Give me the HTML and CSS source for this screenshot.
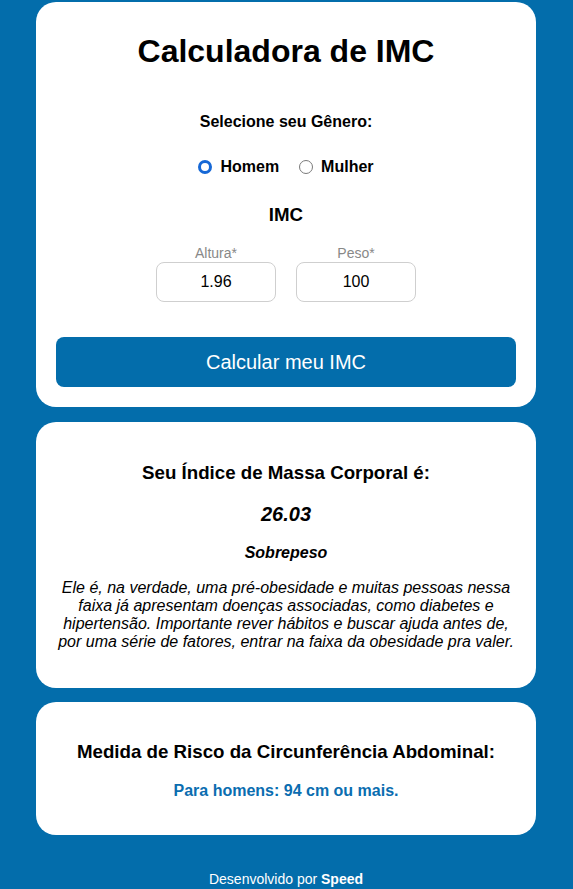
FILE: index.html
```html
<!DOCTYPE html>
<html lang="pt-BR">
<head>
<meta charset="utf-8">
<title>Calculadora de IMC</title>
<link rel="stylesheet" href="styles.css">
</head>
<body>
<main class="page">
  <section class="card card-form">
    <h1 class="title">Calculadora de IMC</h1>
    <p class="gender-title">Selecione seu Gênero:</p>
    <div class="gender-options">
      <label class="option"><input class="radio" type="radio" name="genero" checked><span>Homem</span></label>
      <label class="option"><input class="radio" type="radio" name="genero"><span>Mulher</span></label>
    </div>
    <h3 class="section-title">IMC</h3>
    <div class="fields">
      <label class="field"><span class="field-label">Altura*</span><input class="field-input" type="text" value="1.96"></label>
      <label class="field"><span class="field-label">Peso*</span><input class="field-input" type="text" value="100"></label>
    </div>
    <button class="btn" type="button">Calcular meu IMC</button>
  </section>

  <section class="card card-result">
    <h3 class="result-title">Seu Índice de Massa Corporal é:</h3>
    <p class="result-value">26.03</p>
    <p class="result-class">Sobrepeso</p>
    <p class="result-text">Ele é, na verdade, uma pré-obesidade e muitas pessoas nessa faixa já apresentam doenças associadas, como diabetes e hipertensão. Importante rever hábitos e buscar ajuda antes de, por uma série de fatores, entrar na faixa da obesidade pra valer.</p>
  </section>

  <section class="card card-risk">
    <h3 class="risk-title">Medida de Risco da Circunferência Abdominal:</h3>
    <p class="risk-text">Para homens: 94 cm ou mais.</p>
  </section>

  <footer class="footer">Desenvolvido por <strong>Speed</strong></footer>
</main>
</body>
</html>
```

FILE: styles.css
```css
* { box-sizing: border-box; }

html, body {
  margin: 0;
  padding: 0;
  background: #036dab;
}

body {
  font-family: "Liberation Sans", Arial, sans-serif;
  color: #000;
}

.page {
  width: 500px;
  margin: 0 0 0 calc(50% - 250.5px);
  padding: 2px 0 20px;
  display: flex;
  flex-direction: column;
  gap: 14px;
}

.card {
  background: #fff;
  border-radius: 20px;
  padding: 20px;
  text-align: center;
}

.card-form {
  padding-bottom: 20px;
  margin-bottom: 1px;
}

.title {
  margin: 11px 0 0;
  font-size: 32px;
  font-weight: bold;
  line-height: normal;
}

.gender-title {
  margin: 43px 0 0;
  font-size: 16px;
  font-weight: bold;
}

.gender-options {
  margin-top: 27px;
  display: flex;
  justify-content: center;
  gap: 20px;
  height: 18px;
}

.option {
  display: flex;
  align-items: center;
  gap: 8px;
  font-size: 16px;
  font-weight: bold;
}

.radio {
  appearance: none;
  -webkit-appearance: none;
  margin: 0;
  width: 14px;
  height: 14px;
  border-radius: 50%;
  border: 1px solid #7a7a7a;
  background: #fff;
}

.radio:checked {
  border: 3.5px solid #1668d6;
}

.section-title {
  margin: 28px 0 0;
  font-size: 18.72px;
  font-weight: bold;
}

.fields {
  margin-top: 19px;
  display: flex;
  justify-content: center;
  gap: 20px;
}

.field {
  display: flex;
  flex-direction: column;
  align-items: center;
  gap: 1px;
}

.field-label {
  font-size: 14px;
  color: #888;
  line-height: 16px;
}

.field-input {
  width: 120px;
  height: 40px;
  border: 1px solid #cfcfcf;
  border-radius: 8px;
  font-family: "Liberation Sans", Arial, sans-serif;
  font-size: 16px;
  text-align: center;
  color: #000;
  padding: 0;
  outline: none;
}

.btn {
  display: block;
  width: 100%;
  height: 50px;
  margin-top: 35px;
  border: none;
  border-radius: 8px;
  background: #036dab;
  color: #fff;
  font-family: "Liberation Sans", Arial, sans-serif;
  font-size: 20px;
}

.card-result { padding-bottom: 37px; }

.result-title {
  margin: 20px 0 0;
  font-size: 18.72px;
  font-weight: bold;
}

.result-value {
  margin: 18.5px 0 0;
  font-size: 20px;
  font-weight: bold;
  font-style: italic;
}

.result-class {
  margin: 18.5px 0 0;
  font-size: 16px;
  font-weight: bold;
  font-style: italic;
}

.result-text {
  margin: 17px 0 0;
  font-size: 16px;
  font-style: italic;
}

.card-risk { padding-bottom: 35px; }

.risk-title {
  margin: 18.5px 0 0;
  font-size: 18.72px;
  font-weight: bold;
}

.risk-text {
  margin: 19.5px 0 0;
  font-size: 16px;
  font-weight: bold;
  color: #0a6db0;
}

.footer {
  margin-top: 22px;
  text-align: center;
  color: #fff;
  font-size: 14px;
}
```
